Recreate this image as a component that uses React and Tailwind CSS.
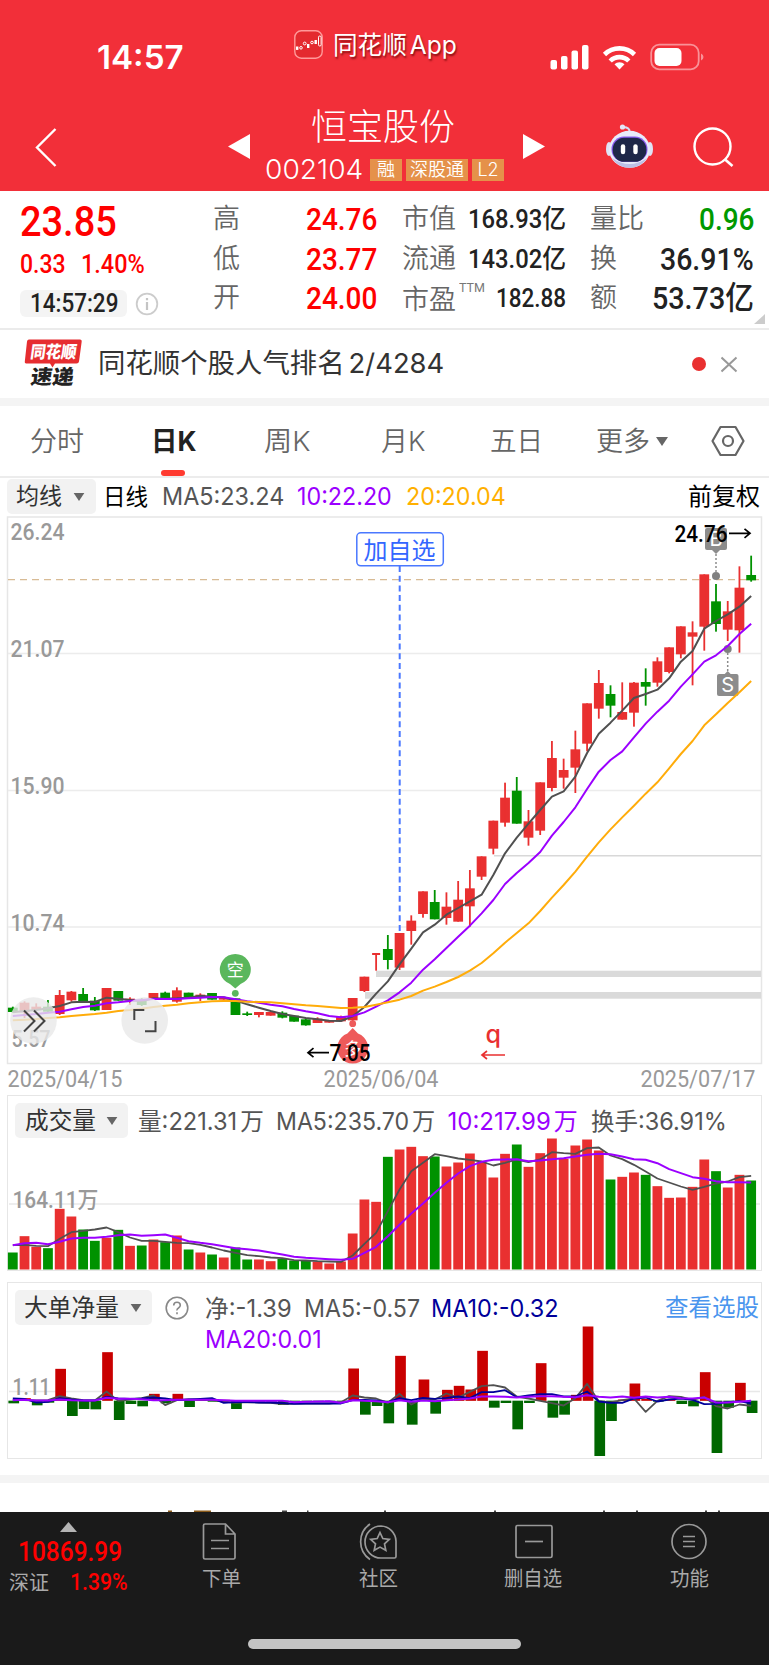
import React, { useLayoutEffect, useRef, useState } from "react";

// Text scaled horizontally so that it fills exactly w pixels.
function T({ w, className = "", children }) {
  const ref = useRef(null);
  const [s, setS] = useState(1);
  useLayoutEffect(() => {
    const n = ref.current.offsetWidth;
    if (n) setS(w / n);
  }, [w]);
  return (
    <span className={"block shrink-0 whitespace-nowrap " + className} style={{ width: w }}>
      <span ref={ref} className="inline-block origin-left" style={{ transform: `scaleX(${s})` }}>
        {children}
      </span>
    </span>
  );
}

const DIN = "font-[Roboto,'Noto_Sans_CJK_SC',sans-serif]";

const X = (i) => 12.8 + 11.72 * i;
const RED = "#e93030";
const GREEN = "#009200";

// kind, body top, body bottom, high, low
const A = (o) => (r) => [r[0], ...r.slice(1).map((v) => o + v / 3)];
const candles = [
  ...[
    ["G", 143, 156, 140, 158], ["R", 128, 157, 124, 174], ["R", 140, 150, 130, 152], ["G", 140, 155, 120, 158],
    ["R", 105, 162, 90, 165], ["R", 95, 121, 93, 125], ["G", 102, 124, 84, 126], ["G", 122, 151, 111, 153],
    ["R", 84, 150, 84, 150], ["G", 93, 122, 93, 122], ["R", 116, 121, 112, 135], ["G", 120, 135, 115, 138],
    ["R", 99, 120, 99, 120], ["G", 98, 118, 95, 120], ["R", 91, 125, 82, 128], ["G", 98, 115, 98, 115],
    ["R", 104, 109, 100, 123], ["G", 99, 119, 99, 119], ["R", 112, 119, 112, 119], ["G", 115, 165, 115, 165],
    ["G", 160, 165, 155, 168], ["R", 156, 165, 156, 172], ["R", 156, 167, 156, 167], ["G", 158, 173, 154, 175],
    ["G", 167, 185, 167, 185], ["G", 178, 196, 175, 197], ["R", 176, 189, 172, 189], ["R", 180, 188, 180, 188],
    ["R", 170, 184, 167, 184], ["R", 114, 181, 114, 185],
  ].map(A(960)),
  ...[
    ["R", 590, 633, 590, 636], ["R", 519, 525, 519, 572], ["G", 507, 540, 465, 568], ["R", 459, 563, 459, 570],
    ["R", 422, 453, 406, 494], ["R", 334, 402, 334, 413], ["G", 366, 418, 330, 418], ["R", 380, 414, 337, 434],
    ["R", 359, 425, 303, 425], ["R", 325, 379, 270, 440], ["R", 229, 290, 229, 300], ["R", 122, 206, 122, 223],
    ["R", 53, 128, 8, 140], ["G", 32, 131, -9, 131], ["R", 124, 173, 90, 197], ["R", 7, 152, 7, 165],
  ].map(A(780)),
  ...[
    ["R", 774, 864, 723, 874], ["R", 810, 833, 776, 866], ["R", 748, 803, 692, 879], ["R", 610, 731, 610, 754],
    ["R", 549, 626, 510, 656], ["G", 582, 617, 556, 652], ["R", 636, 659, 547, 659], ["R", 548, 638, 546, 680],
    ["G", 546, 560, 505, 617], ["R", 484, 548, 472, 560], ["R", 442, 516, 442, 520], ["R", 379, 463, 379, 475],
    ["R", 397, 410, 364, 556], ["R", 223, 380, 223, 452], ["G", 304, 372, 252, 395], ["R", 334, 389, 303, 423],
    ["R", 263, 391, 199, 458], ["G", 225, 241, 167, 245],
  ].map(A(500)),
];
const at = (o, a) => a.map((v) => o + v / 3);
const ma5 = [
  ...at(960, [157, 153, 150, 145, 138, 127, 125, 126, 113, 116, 120, 124, 115, 116, 115, 113, 107, 110, 112, 122, 133, 143, 153, 162, 168, 174, 178, 182, 183]),
  ...at(780, [709, 681, 641, 604, 553, 506, 457, 434, 404, 384, 364, 344, 285, 220, 173, 131, 90]),
  ...at(500, [890, 874, 830, 759, 701, 668, 632, 594, 582, 569, 535, 485, 453, 386, 363, 343, 320, 288]),
];
const ma10 = [
  ...at(960, [168, 165, 162, 158, 155, 148, 141, 137, 130, 127, 123, 120, 117, 117, 117, 115, 113, 111, 112, 118, 124, 128, 134, 139, 147, 154, 160, 168, 172]),
  ...at(780, [708, 697, 680, 661, 637, 608, 569, 538, 504, 470, 437, 400, 360, 312, 279, 249, 216, 167, 126]),
  ...at(500, [922, 867, 815, 780, 754, 712, 671, 635, 602, 560, 523, 485, 466, 438, 402, 371]),
];
const ma20 = [
  ...at(960, [181, 179, 177, 174, 172, 168, 165, 162, 158, 153, 150, 146, 141, 137, 134, 130, 127, 124, 123, 123, 125, 126, 127, 130, 133, 136, 138, 141, 144]),
  ...at(780, [683, 681, 674, 667, 659, 648, 632, 620, 606, 591, 572, 549, 520, 488, 459, 430, 393, 353, 315, 275, 230, 187, 148, 112, 77, 41, 7]),
  ...at(500, [805, 762, 723, 676, 643, 609, 577, 543]),
];
const vol = [519, 470, 502, 506, 388, 411, 450, 484, 475, 451, 499, 498, 480, 488, 468, 510, 519, 525, 534, 504, 540, 540, 545, 538, 543, 544, 547, 552, 546, 462, 360, 367, 232, 210, 202, 230, 231, 261, 249, 222, 248, 294, 223, 195, 262, 221, 177, 238, 198, 180, 213, 300, 292, 279, 286, 320, 355, 354, 322, 240, 275, 324, 286, 303];
const volColors = "GRRGRRGGRGRGRGRGRGRGGRRGGGRRRRRRGRRRGRRRRRRGRRRRRRRGRRGRRRRRGRRG";
const vol5 = [497, 496, 499, 500, 478, 458, 454, 450, 444, 458, 474, 484, 484, 487, 490, 491, 496, 504, 513, 520, 527, 530, 534, 536, 542, 543, 545, 546, 547, 528, 493, 460, 395, 330, 275, 250, 224, 230, 237, 241, 246, 258, 250, 240, 248, 240, 218, 221, 223, 206, 204, 228, 239, 256, 276, 297, 309, 321, 331, 322, 312, 306, 293, 289];
const vol10 = [497, 491, 490, 494, 487, 477, 475, 475, 472, 467, 465, 469, 467, 465, 475, 485, 490, 494, 500, 506, 509, 513, 519, 525, 532, 535, 537, 539, 541, 538, 520, 502, 470, 436, 402, 372, 340, 310, 282, 260, 247, 241, 240, 239, 245, 243, 239, 236, 231, 226, 223, 224, 231, 239, 241, 251, 269, 281, 293, 298, 305, 308, 308, 309];
const net = [372, 356, 378, 370, 268, 410, 389, 390, 218, 422, 374, 381, 343, 372, 343, 383, 360, 366, 361, 389, 367, 364, 367, 377, 367, 366, 366, 366, 367, 267, 406, 380, 432, 229, 436, 300, 403, 331, 319, 330, 214, 385, 371, 450, 371, 251, 415, 406, 346, 141, 530, 425, 360, 312, 358, 366, 358, 374, 381, 278, 521, 385, 310, 401];
const net5 = [362, 362, 363, 362, 350, 357, 362, 363, 336, 364, 360, 356, 348, 377, 362, 360, 361, 362, 366, 370, 368, 369, 370, 374, 372, 372, 372, 372, 368, 348, 354, 357, 370, 343, 375, 358, 360, 342, 354, 337, 320, 317, 324, 351, 357, 364, 371, 378, 356, 313, 365, 369, 362, 357, 397, 364, 350, 352, 361, 352, 380, 387, 375, 379];
const net10 = [357, 358, 369, 367, 356, 360, 363, 363, 352, 357, 358, 357, 354, 357, 362, 360, 358, 356, 370, 368, 368, 369, 369, 371, 373, 372, 372, 372, 372, 362, 361, 363, 368, 356, 362, 355, 358, 355, 351, 356, 338, 338, 332, 353, 348, 344, 344, 351, 351, 336, 366, 370, 370, 357, 354, 366, 360, 357, 361, 374, 373, 368, 365, 372];
const net20 = [362, 361, 363, 363, 360, 362, 363, 363, 355, 358, 358, 359, 362, 362, 361, 361, 361, 361, 362, 364, 364, 364, 364, 364, 368, 367, 366, 365, 370, 362, 364, 365, 368, 362, 367, 363, 365, 362, 360, 357, 351, 351, 352, 354, 352, 350, 350, 352, 353, 347, 352, 354, 351, 355, 351, 354, 352, 356, 357, 354, 369, 369, 367, 364];

function Line({ ys, color, width = 2 }) {
  return <polyline points={ys.map((y, i) => `${X(i)},${y}`).join(" ")} fill="none" stroke={color} strokeWidth={width} strokeLinejoin="round" />;
}

function Label({ x, y, w, size = 23, fill = "#999", weight = 500, children }) {
  return (
    <text x={x} y={y} fontSize={size} fill={fill} fontWeight={weight} textLength={w} lengthAdjust="spacingAndGlyphs" fontFamily="Roboto, 'Noto Sans CJK SC', sans-serif">
      {children}
    </text>
  );
}

function Down({ className = "", w = 12, h = 9 }) {
  return (
    <svg className={"shrink-0 " + className} width={w} height={h} viewBox="0 0 12 9">
      <path d="M0 0H12L6 9Z" fill="#666" />
    </svg>
  );
}

function StatusBar() {
  return (
    <div className="flex h-[96px] text-white">
      <T w={87} className="ml-[97px] mt-[35px] text-[32px] leading-[46px] font-semibold font-[Inter,sans-serif]">14:57</T>
      <svg className="ml-[110px] mt-[30px] shrink-0" width="29" height="29" viewBox="0 0 29 29">
        <rect x="0.8" y="0.8" width="27.4" height="27.4" rx="6.5" fill="#e42a2f" stroke="#ff9a9a" strokeWidth="1.4" />
        <g fill="#fff">
          <rect x="2" y="16.5" width="2.4" height="3.4" />
          <rect x="13" y="14" width="2.4" height="4" />
          <rect x="20.5" y="10" width="2.4" height="4" />
        </g>
        <g fill="none" stroke="#fff">
          <circle cx="7" cy="17.8" r="1.3" />
          <circle cx="10.7" cy="13.5" r="1.4" />
          <circle cx="18" cy="12.5" r="1.3" />
          <rect x="24.5" y="6" width="2.6" height="10" rx="1.2" />
        </g>
      </svg>
      <T w={124} className="ml-[10px] mt-[27px] text-[25px] leading-[36px] [text-shadow:1px_2px_2px_rgba(90,0,0,0.7)] font-[Inter,'Noto_Sans_CJK_SC',sans-serif]">同花顺<span className="ml-[3px]">App</span></T>
      <svg className="ml-[93px] mt-[43px] shrink-0" width="154" height="28" viewBox="551 43 154 28">
        <g fill="#fff">
          <rect x="551.5" y="60" width="6.5" height="9.5" rx="2" />
          <rect x="562" y="56" width="6.5" height="13.5" rx="2" />
          <rect x="572.5" y="50.5" width="6.5" height="19" rx="2" />
          <rect x="583" y="45" width="6.5" height="24.5" rx="2" />
        </g>
        <g fill="none" stroke="#fff" strokeWidth="4.6">
          <path d="M605.5 54.5 A 21.5 21.5 0 0 1 635.500 54.5" />
          <path d="M611.2 61 A 13 13 0 0 1 629.8 61" />
        </g>
        <path d="M620.5 69.500 L615.500 64.300 A 7 7 0 0 1 625.500 64.300 Z" fill="#fff" />
        <rect x="652.2" y="44.700" width="47.500" height="24.600" rx="8" fill="none" stroke="#f99298" strokeWidth="1.8" />
        <rect x="655.500" y="48" width="27" height="18" rx="5" fill="#fff" />
        <path d="M702 53.500 Q704.500 54.500 704.500 57 T702 60.500Z" fill="#f99298" />
      </svg>
    </div>
  );
}

function Robot() {
  return (
    <svg className="shrink-0" width="48" height="46" viewBox="606 123 48 46">
      <path d="M629.500 132 Q630 127.500 623.500 127" fill="none" stroke="#d8dcf4" strokeWidth="2.200" strokeLinecap="round" />
      <circle cx="622.500" cy="127" r="2.600" fill="#e4e6f8" />
      <ellipse cx="609" cy="149" rx="3" ry="7" fill="#dfe3f6" />
      <ellipse cx="650" cy="149" rx="3" ry="7" fill="#dfe3f6" />
      <ellipse cx="629.500" cy="149.300" rx="20.500" ry="18.500" fill="#e8ebfa" />
      <path d="M612 158 Q629.500 170 647 158 Q641 167.800 629.500 167.800 Q618 167.800 612 158Z" fill="#bcc0e6" />
      <rect x="611.500" y="136.500" width="36" height="25.500" rx="12.500" fill="#8a5cf0" />
      <rect x="612.700" y="137.800" width="33.700" height="24" rx="11.500" fill="#1e2748" />
      <rect x="620.800" y="144.300" width="4.400" height="10" rx="2.200" fill="#fff" />
      <rect x="633.300" y="144.300" width="4.400" height="10" rx="2.200" fill="#fff" />
    </svg>
  );
}

function Header() {
  const tag = "flex h-[22px] items-center justify-center bg-[#e5914a] text-[18px] leading-none font-[350]";
  return (
    <div className="flex h-[95px] text-white font-[Inter,'Noto_Sans_CJK_SC',sans-serif]">
      <svg className="ml-[34px] mt-[30px] shrink-0" width="26" height="44" viewBox="34 126 26 44">
        <path d="M55.500 129 L37 147.500 L55.500 166" fill="none" stroke="#fff" strokeWidth="2.400" />
      </svg>
      <svg className="ml-[168px] mt-[38px] shrink-0" width="22" height="25" viewBox="0 0 22 25"><path d="M22 0V25L0 12.500Z" fill="#fff" /></svg>
      <div className="ml-[15px] w-[241px]">
        <T w={144} className="ml-[46px] mt-[3px] text-[36px] leading-[50px] font-light font-[Noto_Sans_CJK_SC,sans-serif]">恒宝股份</T>
        <div className="mt-[4px] flex items-center">
          <T w={98} className="text-[27px] leading-[34px] font-light">002104</T>
          <div className={tag + " ml-[7px] w-[32px]"}>融</div>
          <div className={tag + " ml-[4px] w-[62px]"}>深股通</div>
          <div className={tag + " ml-[4px] w-[32px]"}>L2</div>
        </div>
      </div>
      <svg className="ml-[17px] mt-[38px] shrink-0" width="22" height="25" viewBox="0 0 22 25"><path d="M0 0V25L22 12.500Z" fill="#fff" /></svg>
      <div className="ml-[61px] mt-[27px]"><Robot /></div>
      <svg className="ml-[38px] mt-[30px] shrink-0" width="44" height="44" viewBox="692 126 44 44">
        <circle cx="712.500" cy="146.500" r="18" fill="none" stroke="#fff" strokeWidth="2.400" />
        <path d="M724.500 159 L732.500 166" stroke="#fff" strokeWidth="2.600" />
      </svg>
    </div>
  );
}

function Quote() {
  const row = "flex h-[39.5px] items-center justify-between";
  const lab = "text-[27px] leading-[39px] text-[#666] font-[350]";
  const mid = "text-[26px] leading-[39px] font-medium text-[#222]";
  const big = "text-[31.5px] leading-[39px] font-medium";
  return (
    <div className={"flex h-[139px] border-b-2 border-[#ebebeb] bg-white " + DIN}>
      <div className="ml-[20px] w-[192px] shrink-0">
        <T w={97} className="mt-[5px] text-[43px] leading-[50px] font-medium text-[#f00]">23.85</T>
        <div className="mt-[2px] flex text-[26px] leading-[32px] font-medium text-[#f00]">
          <T w={46}>0.33</T>
          <T w={64} className="ml-[15px]">1.40%</T>
        </div>
        <div className="mt-[10px] flex items-center">
          <div className="flex h-[27px] w-[107px] items-center rounded-[6px] bg-[#f4f4f4] pl-[10px]">
            <T w={88} className="text-[25px] leading-[27px] font-medium text-[#222]">14:57:29</T>
          </div>
          <svg className="ml-[8px]" width="24" height="24" viewBox="0 0 24 24">
            <circle cx="12" cy="12" r="10.300" fill="none" stroke="#ccc" strokeWidth="1.800" />
            <path d="M12 10V18M12 6V8.300" stroke="#c4c4c4" strokeWidth="2.200" />
          </svg>
        </div>
      </div>
      <div className="mt-[9px] w-[165px] shrink-0">
        <div className={row}><T w={27} className={lab + " ml-px"}>高</T><T w={71} className={big + " text-[#f00]"}>24.76</T></div>
        <div className={row}><T w={27} className={lab + " ml-px"}>低</T><T w={71} className={big + " text-[#f00]"}>23.77</T></div>
        <div className={row}><T w={27} className={lab + " ml-px"}>开</T><T w={71} className={big + " text-[#f00]"}>24.00</T></div>
      </div>
      <div className="ml-[25px] mt-[9px] w-[164px] shrink-0">
        <div className={row}><T w={54} className={lab}>市值</T><T w={98} className={mid}>168.93亿</T></div>
        <div className={row}><T w={54} className={lab}>流通</T><T w={98} className={mid}>143.02亿</T></div>
        <div className={row}>
          <div className="flex pt-[3px]"><T w={54} className={lab}>市盈</T><T w={26} className="ml-[3px] -mt-[3px] text-[13px] leading-[20px] text-[#777]">TTM</T></div>
          <T w={70} className={mid}>182.88</T>
        </div>
      </div>
      <div className="ml-[24px] mt-[9px] w-[164px] shrink-0">
        <div className={row}><T w={54} className={lab}>量比</T><T w={55} className={big + " text-[#090]"}>0.96</T></div>
        <div className={row}><T w={27} className={lab}>换</T><T w={94} className={big + " text-[#222]"}>36.91%</T></div>
        <div className={row}><T w={27} className={lab}>额</T><T w={102} className={big + " text-[#222]"}>53.73亿</T></div>
      </div>
      <svg className="mt-[123px] shrink-0" width="11" height="10" viewBox="0 0 11 10"><path d="M11 0V10H0Z" fill="#ccc" /></svg>
    </div>
  );
}

function News() {
  return (
    <div className="flex h-[68px] items-center bg-white">
      <svg className="ml-[24px] shrink-0 overflow-visible" width="58" height="50" viewBox="24 338.5 58 50">
        <path d="M29 339H80Q82 339 81.700 341L79 361Q78.700 363 76.500 363H55L52.500 367L50 363H27Q24.500 363 24.800 361L27 341Q27.300 339 29 339Z" fill="#e62d30" />
        <g fontFamily="'Noto Sans CJK SC', sans-serif" fontWeight="900" transform="skewX(-8)">
          <text x="80" y="357.500" fontSize="17" fill="#fff" textLength="46" lengthAdjust="spacingAndGlyphs">同花顺</text>
          <text x="84" y="384" fontSize="20" fill="#222" textLength="43" lengthAdjust="spacingAndGlyphs">速递</text>
        </g>
      </svg>
      <T w={346} className="ml-[16px] text-[27px] leading-[40px] text-[#333] font-[Inter,'Noto_Sans_CJK_SC',sans-serif]">同花顺个股人气排名<span className="ml-[4px]">2/4284</span></T>
      <div className="ml-[248px] h-[14px] w-[14px] shrink-0 rounded-full bg-[#e93030]" />
      <svg className="ml-[15px] shrink-0" width="17" height="17" viewBox="0 0 17 17"><path d="M0.500 1.500L15.500 15.500M15.500 1.500L0.500 15.500" stroke="#999" strokeWidth="2" /></svg>
    </div>
  );
}

function Tabs() {
  const t = "text-[27px] leading-[40px] pt-[2px]";
  return (
    <div className="relative flex h-[72px] items-center border-b-2 border-[#ececec] bg-white text-[#666] font-[350] font-[Inter,'Noto_Sans_CJK_SC',sans-serif]">
      <T w={54} className={t + " ml-[30px]"}>分时</T>
      <T w={45} className={t + " ml-[67px] font-bold text-[#222]"}>日K</T>
      <T w={46} className={t + " ml-[68px]"}>周K</T>
      <T w={44} className={t + " ml-[71px]"}>月K</T>
      <T w={53} className={t + " ml-[65px]"}>五日</T>
      <T w={54} className={t + " ml-[53px]"}>更多</T>
      <Down className="ml-[6px]" w={12} h={9} />
      <svg className="ml-[43px] shrink-0" width="34" height="32" viewBox="0 0 34 32">
        <path d="M9.500 2H24.500L32.500 16L24.500 30H9.500L1.500 16Z" fill="none" stroke="#666" strokeWidth="2.200" strokeLinejoin="round" />
        <circle cx="17" cy="16" r="5" fill="none" stroke="#666" strokeWidth="2.200" />
      </svg>
      <div className="absolute bottom-0 left-[161px] h-[6px] w-[24px] rounded-[3px] bg-[#ff3b30]" />
    </div>
  );
}

function MaRow() {
  const f = "text-[24px] leading-[36px]";
  return (
    <div className="flex h-[38px] items-start bg-white pt-[1px] font-[Inter,'Noto_Sans_CJK_SC',sans-serif]">
      <div className="ml-[7px] flex h-[35px] w-[89px] shrink-0 items-center rounded-[5px] bg-[#f2f2f2] pl-[9px] text-[#333]">
        <T w={46} className="text-[23px] leading-[35px]">均线</T>
        <Down className="ml-[11px]" w={12} h={8} />
      </div>
      <T w={45} className="ml-[7px] text-[23px] leading-[36px] text-black">日线</T>
      <T w={122} className={f + " ml-[14px] text-[#555]"}>MA5:23.24</T>
      <T w={95} className={f + " ml-[13px] text-[#9b00ff]"}>10:22.20</T>
      <T w={100} className={f + " ml-[14px] text-[#ffb000]"}>20:20.04</T>
      <T w={72} className="ml-[182px] text-[24px] leading-[35px] text-black">前复权</T>
    </div>
  );
}

function KChart() {
  return (
    <svg className="block w-full" width="769" height="580" viewBox="0 516 769 580">
      <rect x="7.500" y="517" width="754" height="546.500" fill="none" stroke="#e6e6e6" strokeWidth="1.500" />
      <path d="M8 653.500H761M8 790.500H761M8 927H761" stroke="#ececec" strokeWidth="1.300" />
      <rect x="376" y="970.700" width="385" height="6.300" fill="#dadada" />
      <rect x="365" y="992" width="396" height="6.700" fill="#dadada" />
      <path d="M494 855.700H761" stroke="#d8d8d8" strokeWidth="1.600" />
      <path d="M8 579.700H761" stroke="#d8bb95" strokeWidth="1.300" strokeDasharray="7 5" />
      <Label x={10.500} y={540} w={54}>26.24</Label>
      <Label x={10.500} y={657} w={54}>21.07</Label>
      <Label x={10.500} y={793.500} w={54}>15.90</Label>
      <Label x={10.500} y={930.500} w={54}>10.74</Label>
      <Label x={11.500} y={1047} w={39}>5.57</Label>
      <rect x="705" y="528" width="22" height="22" rx="2" fill="#8c8c8c" />
      <path d="M712 550H720L716 554Z" fill="#8c8c8c" />
      <text x="716" y="546" fontSize="20" fill="#fff" textAnchor="middle" fontFamily="Inter, sans-serif">B</text>
      <path d="M716 554V572" stroke="#8c8c8c" strokeWidth="1.500" strokeDasharray="2 2" />
      <circle cx="716" cy="576" r="4" fill="#808080" />
      <path d="M399.700 566V933" stroke="#4a78ff" strokeWidth="2" strokeDasharray="6 3.700" />
      {candles.map(([k, t, b, h, l], i) => (
        <g key={i} fill={k === "R" ? RED : GREEN}>
          <rect x={X(i) - (i === 31 ? 4 : 4.900)} y={t} width={i === 31 ? 8 : 9.800} height={Math.max(b - t, 1.500)} />
          <rect x={X(i) - 0.900} y={h} width="1.800" height={l - h} />
        </g>
      ))}
      <circle cx="727.700" cy="649" r="4" fill="#808080" />
      <path d="M727.700 653V672" stroke="#8c8c8c" strokeWidth="1.500" strokeDasharray="2 2" />
      <path d="M723.700 675H731.700L727.700 671Z" fill="#8c8c8c" />
      <rect x="717" y="674" width="21.500" height="22" rx="2" fill="#8c8c8c" />
      <text x="727.700" y="692" fontSize="20" fill="#fff" textAnchor="middle" fontFamily="Inter, sans-serif">S</text>
      <Line ys={ma5} color="#505050" />
      <Line ys={ma10} color="#9b00ff" />
      <Line ys={ma20} color="#ffac0a" />
      <rect x="356.800" y="532.800" width="86.500" height="33" rx="4" fill="#fff" stroke="#4a78ff" strokeWidth="1.500" />
      <Label x={363.500} y={558.500} w={72} size={23.500} fill="#3366ff" weight={400}>加自选</Label>
      <Label x={674.500} y={541.500} w={53} size={23} fill="#000">24.76</Label>
      <path d="M729 533.300H750M744.500 528.800L750 533.300L744.500 537.800" fill="none" stroke="#000" strokeWidth="1.700" />
      <path d="M235.300 988.500L230 984A15.500 15.500 0 1 1 240.600 984Z" fill="#5ab75c" />
      <circle cx="235.300" cy="993.300" r="4.200" fill="#fff" />
      <circle cx="235.300" cy="993.300" r="3.400" fill="#5ab75c" />
      <Label x={226.800} y={975.500} w={17} size={17.500} fill="#fff" weight={400}>空</Label>
      <circle cx="352.700" cy="1023.700" r="3.400" fill="#ee5a5a" />
      <path d="M352.700 1028L347.400 1033.500A15.500 15.500 0 1 0 358 1033.500Z" fill="#ee5a5a" />
      <Label x={344.200} y={1054.500} w={17} size={17.500} fill="#fff" weight={400}>多</Label>
      <path d="M329 1052.700H308M313.500 1048.200L308 1052.700L313.500 1057.200" fill="none" stroke="#000" strokeWidth="1.700" />
      <Label x={329.500} y={1061} w={41} size={23} fill="#000">7.05</Label>
      <text x="485.500" y="1042.500" fontSize="25" fill={RED} fontFamily="Inter, sans-serif" fontWeight="500">q</text>
      <path d="M505 1055H482M487 1051L482 1055L487 1059" fill="none" stroke={RED} strokeWidth="1.700" />
      <circle cx="33.500" cy="1020.500" r="23.300" fill="#e8e8e8" opacity="0.800" />
      <circle cx="144.700" cy="1020.500" r="23.300" fill="#e8e8e8" opacity="0.800" />
      <path d="M24 1010.500L34.500 1021L24 1031.500M34 1010.500L44.500 1021L34 1031.500" fill="none" stroke="#444" strokeWidth="2" />
      <path d="M134.300 1020V1010H144.300M155.500 1021V1031.300H145" fill="none" stroke="#444" strokeWidth="2" />
      <Label x={7.500} y={1086.500} w={115} weight={450}>2025/04/15</Label>
      <Label x={323.500} y={1086.500} w={115} weight={450}>2025/06/04</Label>
      <Label x={640.500} y={1086.500} w={115} weight={450}>2025/07/17</Label>
    </svg>
  );
}

function VolumePanel() {
  const f = "text-[24px] leading-[37px] text-[#555]";
  return (
    <div className="ml-[6.5px] -mt-px h-[176px] w-[755px] border-[1.5px] border-[#e6e6e6] bg-white font-[Inter,'Noto_Sans_CJK_SC',sans-serif]">
      <div className="flex h-[43px] pt-[7px] pl-[7px]">
        <div className="flex h-[35px] w-[113px] shrink-0 items-center rounded-[5px] bg-[#f2f2f2] pl-[10px]">
          <T w={71} className="text-[24px] leading-[35px] text-[#333]">成交量</T>
          <Down className="ml-[10px]" w={12} h={8} />
        </div>
        <T w={126} className={f + " ml-[10px]"}>量:221.31<span className="ml-[3px]">万</span></T>
        <T w={159} className={f + " ml-[12px]"}>MA5:235.70<span className="ml-[3px]">万</span></T>
        <T w={130} className={f + " ml-[13px] text-[#9b00ff]!"}>10:217.99<span className="ml-[3px]">万</span></T>
        <T w={136} className={f + " ml-[13px]"}>换手:36.91%</T>
      </div>
      <svg className="block overflow-visible" width="752" height="130" viewBox="8 1139.5 752 130">
        <path d="M9 1204.500H760" stroke="#e8e8e8" strokeWidth="1.300" />
        <Label x={12.500} y={1208} w={86}>164.11万</Label>
        {vol.map((v, i) => (
          <rect key={i} x={X(i) - 4.900} y={1080 + v / 3} width="9.800" height={(570 - v) / 3} fill={volColors[i] === "R" ? RED : GREEN} />
        ))}
        <Line ys={at(1080, vol5)} color="#505050" width={1.800} />
        <Line ys={at(1080, vol10)} color="#9b00ff" />
      </svg>
    </div>
  );
}

function NetPanel() {
  const f = "text-[24px] leading-[31px] text-[#555]";
  return (
    <div className="ml-[6.5px] mt-[11px] h-[177px] w-[755px] border-[1.5px] border-[#e6e6e6] bg-white font-[Inter,'Noto_Sans_CJK_SC',sans-serif]">
      <div className="flex h-[72px] pt-[7px] pl-[7px]">
        <div className="flex h-[35px] w-[137px] shrink-0 items-center rounded-[5px] bg-[#f2f2f2] pl-[9px]">
          <T w={95} className="text-[24px] leading-[35px] text-[#333]">大单净量</T>
          <Down className="ml-[11px]" w={12} h={8} />
        </div>
        <svg className="ml-[13px] mt-[6px] shrink-0" width="24" height="24" viewBox="0 0 24 24">
          <circle cx="12" cy="12" r="10.800" fill="none" stroke="#888" strokeWidth="1.600" />
          <path d="M8.700 9.500Q8.800 6.300 12 6.300T15.300 9.300Q15.300 10.900 13.500 12T12 14.500M12 16.300V18.300" fill="none" stroke="#888" strokeWidth="1.600" />
        </svg>
        <div className="ml-[16px] w-[460px]">
          <div className="flex pt-[3px]">
            <T w={87} className={f}>净:-1.39</T>
            <T w={116} className={f + " ml-[12px]"}>MA5:-0.57</T>
            <T w={128} className={f + " ml-[11px] text-[#00009a]!"}>MA10:-0.32</T>
          </div>
          <T w={117} className={f + " text-[#9b00ff]!"}>MA20:0.01</T>
        </div>
        <T w={94} className="ml-0 text-[24px] leading-[36px] text-[#4a95ee]">查看选股</T>
      </div>
      <svg className="block overflow-visible" width="752" height="100" viewBox="8 1355.5 752 100">
        <path d="M9 1392H760" stroke="#e8e8e8" strokeWidth="1.300" />
        <Label x={12.500} y={1395} w={38}>1.11</Label>
        {net.map((v, i) => (
          <rect key={i} x={X(i) - 4.400} y={1280 + Math.min(v, 363.500) / 3} width="10.700" height={Math.max(Math.abs(v - 364) / 3, 1)} fill={v < 364 ? "#c90000" : "#006700"} />
        ))}
        <Line ys={at(1280, net5)} color="#505050" width={1.800} />
        <Line ys={at(1280, net10)} color="#00009a" width={1.800} />
        <Line ys={at(1280, net20)} color="#9b00ff" />
      </svg>
    </div>
  );
}

function NavItem({ className, w, label, children }) {
  return (
    <div className={"flex shrink-0 flex-col items-center " + className}>
      <svg width="44" height="40" viewBox="0 0 44 40" fill="none" stroke="#999" strokeWidth="1.700">{children}</svg>
      <T w={w} className="mt-[2px] text-[20px] leading-[32px] text-[#aaa]">{label}</T>
    </div>
  );
}

function Footer() {
  return (
    <div className="h-[153px] bg-[#1a1a1a] font-[Roboto,'Noto_Sans_CJK_SC',sans-serif]">
      <div className="flex h-[127px]">
        <div className="w-[140px] shrink-0">
          <svg className="ml-[60px] mt-[10px] block" width="17" height="10" viewBox="0 0 17 10"><path d="M0 10H17L8.500 0Z" fill="#b4b4b4" /></svg>
          <T w={104} className="ml-[18px] mt-[3px] text-[28px] leading-[34px] font-medium text-[#f00]">10869.99</T>
          <div className="-mt-px flex">
            <T w={40} className="ml-[9px] text-[20px] leading-[30px] text-[#aaa]">深证</T>
            <T w={58} className="ml-[21px] text-[23px] leading-[29px] font-medium text-[#f00]">1.39%</T>
          </div>
        </div>
        <NavItem className="ml-[50px] mt-[9px] w-[62px]" w={39} label="下单">
          <path d="M6 3H26.500L36 13V36.500Q36 38 34.500 38H6Q4.500 38 4.500 36.500V4.500Q4.500 3 6 3ZM26.500 3V13H36" />
          <path d="M12 19.500H30M12 27.500H30" />
        </NavItem>
        <NavItem className="ml-[95px] mt-[9px] w-[62px]" w={39} label="社区">
          <path d="M14 3A21.500 21.500 0 0 0 14 38.500" />
          <path d="M25 5A16 16 0 0 0 25 37H38.500Q40 37 40 35.500V20A15.500 15.500 0 0 0 25 5Z" />
          <path d="M24 11.500L26.800 17.500L33.300 18.300L28.500 22.800L29.800 29.300L24 26.100L18.200 29.300L19.500 22.800L14.700 18.300L21.200 17.500Z" />
        </NavItem>
        <NavItem className="ml-[93px] mt-[9px] w-[62px]" w={58} label="删自选">
          <rect x="5" y="4.500" width="36" height="32" rx="1.500" />
          <path d="M14 20.500H32" />
        </NavItem>
        <NavItem className="ml-[93px] mt-[9px] w-[64px]" w={39} label="功能">
          <circle cx="22" cy="20.500" r="17" />
          <path d="M16 15.500H28M16 20.500H28M16 25.500H28" />
        </NavItem>
      </div>
      <div className="ml-[248px] h-[10px] w-[273px] rounded-full bg-[#c4c4c4]" />
    </div>
  );
}

export default function App() {
  return (
    <div className="h-[1665px] w-[769px] overflow-hidden bg-white">
      <div className="h-[191px] bg-[#f22f39]">
        <StatusBar />
        <Header />
      </div>
      <Quote />
      <News />
      <div className="h-[8px] bg-[#f4f4f4]" />
      <Tabs />
      <MaRow />
      <KChart />
      <VolumePanel />
      <NetPanel />
      <div className="mt-[16px] h-[8px] bg-[#f4f4f4]" />
      <svg className="block" width="769" height="29" viewBox="0 0 769 29">
        <path d="M168 28.300H172M194 28.300H211" stroke="#8a5a1a" strokeWidth="1.400" />
        <path d="M282 28.300H287M307 28.300H308.500M384 28.300H386M494 28.300H496M603 28.300H605M636 28.300H638M705 28.300H707M718 28.300H720" stroke="#444" strokeWidth="1.400" />
      </svg>
      <Footer />
    </div>
  );
}
